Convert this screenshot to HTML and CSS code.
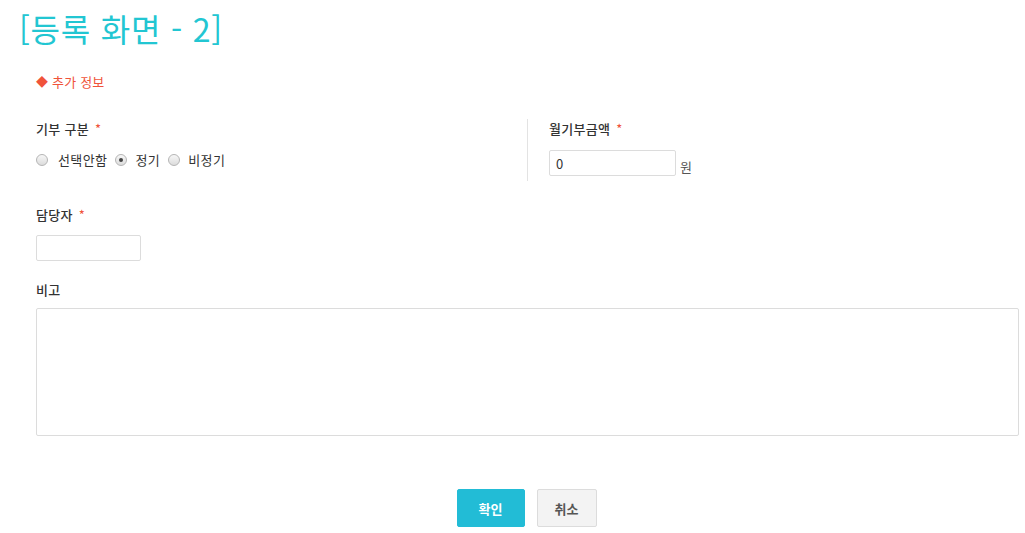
FILE: index.html
```html
<!DOCTYPE html>
<html lang="ko">
<head>
<meta charset="utf-8">
<link rel="stylesheet" href="styles.css">
</head>
<body>
<h1 class="page-title">[등록 화면 - 2]</h1>
<div class="form">
  <div class="section-title"><span class="diamond">◆</span> 추가 정보</div>
  <div class="row-two">
    <div class="col col-left">
      <div class="label">기부 구분 <span class="req">*</span></div>
      <div class="radios">
        <label class="radio"><span class="dot"></span>선택안함</label>
        <label class="radio"><span class="dot checked"></span>정기</label>
        <label class="radio"><span class="dot"></span>비정기</label>
      </div>
    </div>
    <div class="divider"></div>
    <div class="col col-right">
      <div class="label">월기부금액 <span class="req">*</span></div>
      <div class="amount">
        <input class="input input-amount" type="text" value="0">
        <span class="unit">원</span>
      </div>
    </div>
  </div>
  <div class="field field-manager">
    <div class="label">담당자 <span class="req">*</span></div>
    <input class="input input-manager" type="text">
  </div>
  <div class="field field-note">
    <div class="label">비고</div>
    <textarea class="textarea"></textarea>
  </div>
  <div class="buttons">
    <button class="btn btn-primary">확인</button>
    <button class="btn btn-default">취소</button>
  </div>
</div>
</body>
</html>
```

FILE: styles.css
```css
* { box-sizing: border-box; }
html, body { margin: 0; padding: 0; background: #fff; }
body {
  font-family: "Noto Sans CJK KR", "Noto Sans", sans-serif;
  color: #333;
  font-size: 13px;
  width: 1025px;
  height: 533px;
  overflow: hidden;
}
.page-title {
  margin: 0;
  padding: 8px 0 0 19px;
  font-size: 32px;
  font-weight: 400;
  line-height: 40px;
  color: #22c6d2;
  letter-spacing: 0.8px;
}
.form { padding: 0 6px 0 36px; }
.section-title {
  margin-top: 24px;
  color: #f0533a;
  font-size: 13px;
  line-height: 20px;
  letter-spacing: 0.2px;
}
.diamond { font-size: 12px; }
.row-two {
  display: flex;
  margin-top: 28px;
  height: 62px;
}
.col-left { width: 491px; }
.divider { width: 1px; background: #e3e3e3; margin-top: -1px; height: 62px; }
.col-right { padding-left: 21px; }
.label {
  font-size: 13px;
  line-height: 18px;
  color: #333;
  font-weight: 500;
  letter-spacing: 0.3px;
}
.req { color: #f0533a; font-weight: 400; margin-left: 2px; }
.radios {
  display: flex;
  margin-top: 13px;
  gap: 8px;
}
.radio {
  display: flex;
  align-items: center;
  font-size: 13px;
  line-height: 18px;
  color: #333;
  letter-spacing: 0.4px;
}
.dot {
  width: 12px;
  height: 12px;
  border-radius: 50%;
  border: 1px solid #b5b5b5;
  background: linear-gradient(#f7f7f7, #dcdcdc);
  margin-right: 8px;
  position: relative;
}
.radio:first-child .dot { margin-right: 10px; }
.dot.checked::after {
  content: "";
  position: absolute;
  left: 3px; top: 3px;
  width: 4px; height: 4px;
  border-radius: 50%;
  background: #444;
}
.amount {
  display: flex;
  align-items: flex-end;
  margin-top: 12px;
}
.input {
  height: 26px;
  border: 1px solid #dcdcdc;
  border-radius: 2px;
  padding: 0 6px;
  font-family: inherit;
  font-size: 13px;
  color: #333;
  outline: none;
}
.input-amount { width: 127px; }
.unit { margin-left: 4px; line-height: 18px; margin-bottom: 0; color: #555; }
.field-manager { margin-top: 24px; }
.input-manager { width: 105px; margin-top: 11px; display: block; }
.field-note { margin-top: 20px; }
.textarea {
  display: block;
  margin-top: 9px;
  width: 983px;
  height: 128px;
  border: 1px solid #dcdcdc;
  border-radius: 2px;
  resize: none;
}
.buttons {
  display: flex;
  justify-content: center;
  gap: 12px;
  margin-top: 53px;
  padding-right: 2px;
}
.btn {
  height: 38px;
  font-family: inherit;
  font-size: 13px;
  font-weight: 700;
  border-radius: 2px;
  cursor: pointer;
}
.btn-primary {
  width: 68px;
  background: #22bcd6;
  border: 1px solid #22bcd6;
  color: #fff;
}
.btn-default {
  width: 60px;
  background: #f3f3f3;
  border: 1px solid #dcdcdc;
  color: #555;
}
```
